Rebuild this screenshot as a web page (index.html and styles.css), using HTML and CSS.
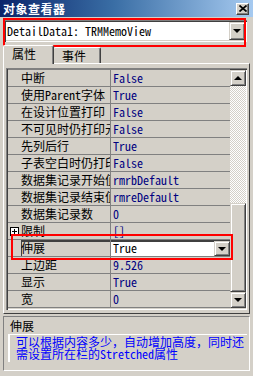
FILE: index.html
```html
<!DOCTYPE html>
<html lang="zh">
  <head>
    <meta charset="UTF-8" />
    <title>对象查看器</title>
    <link rel="stylesheet" href="styles.css">
  </head>
  <body>
    <div class="window">
      <div class="titlebar">
        <span class="title">对象查看器</span>
        <span class="close">
          <svg width="8" height="7" viewBox="0 0 8 7"><path d="M0.5 0.5L7.5 6.5M7.5 0.5L0.5 6.5" stroke="#000" stroke-width="1.7"/></svg>
        </span>
      </div>

      <!-- object selector -->
      <div class="selector">
        <div class="combo">
          <span class="combo-text">DetailData1: TRMMemoView</span>
          <span class="dropbtn"><i class="arrow-down"></i></span>
        </div>
      </div>

      <div class="tabs">
        <span class="tab active">属性</span>
        <span class="tab">事件</span>
      </div>

      <div class="page">
        <div class="grid">
          <div class="rows">
            <div class="row"><span class="gut"></span><span class="name">中断</span><span class="val">False</span></div>
            <div class="row"><span class="gut"></span><span class="name">使用Parent字体</span><span class="val">True</span></div>
            <div class="row"><span class="gut"></span><span class="name">在设计位置打印</span><span class="val">False</span></div>
            <div class="row"><span class="gut"></span><span class="name">不可见时仍打印元素</span><span class="val">False</span></div>
            <div class="row"><span class="gut"></span><span class="name">先列后行</span><span class="val">True</span></div>
            <div class="row"><span class="gut"></span><span class="name">子表空白时仍打印</span><span class="val">False</span></div>
            <div class="row"><span class="gut"></span><span class="name">数据集记录开始值</span><span class="val">rmrbDefault</span></div>
            <div class="row"><span class="gut"></span><span class="name">数据集记录结束值</span><span class="val">rmreDefault</span></div>
            <div class="row"><span class="gut"></span><span class="name">数据集记录数</span><span class="val">0</span></div>
            <div class="row"><span class="gut"><i class="plus"></i></span><span class="name">限制</span><span class="val">[]</span></div>
            <div class="row selected"><span class="gut"></span><span class="name">伸展</span><span class="val edit">True<span class="cellbtn"><i class="arrow-down"></i></span></span></div>
            <div class="row"><span class="gut"></span><span class="name">上边距</span><span class="val">9.526</span></div>
            <div class="row"><span class="gut"></span><span class="name">显示</span><span class="val">True</span></div>
            <div class="row"><span class="gut"></span><span class="name">宽</span><span class="val">0</span></div>
          </div>
          <div class="vscroll">
            <span class="sbtn"><i class="arrow-up"></i></span>
            <span class="track"></span>
            <span class="thumb"></span>
            <span class="sbtn"><i class="arrow-down"></i></span>
          </div>
        </div>
      </div>

      <!-- description -->
      <div class="desc">
        <div class="desc-title">伸展</div>
        <div class="desc-text">可以根据内容多少，自动增加高度，同时还<br>需设置所在栏的Stretched属性</div>
      </div>

      <div class="mark mark-combo"></div>
      <div class="mark mark-row"></div>
    </div>
  </body>
</html>
```

FILE: styles.css
```css
body {
  margin: 0;
  background: #d4d0c8;
  font-family: "Noto Sans Mono CJK SC", "Noto Sans CJK SC", monospace;
  font-size: 12px;
  color: #000;
}

.window {
  position: relative;
  width: 253px;
  height: 376px;
  background: #d4d0c8;
  overflow: hidden;
}

.titlebar {
  height: 17px;
  display: flex;
  align-items: center;
  justify-content: space-between;
  padding: 0 4px 0 3px;
  background: linear-gradient(to right, #0a246a, #3a6ea5 45%, #a6caf0);
}

.title {
  color: #fff;
  font-family: "Noto Sans CJK SC", sans-serif;
  font-weight: bold;
  font-size: 12px;
  letter-spacing: 0.5px;
  line-height: 17px;
}

.close {
  width: 13px;
  height: 12px;
  box-sizing: border-box;
  display: flex;
  align-items: center;
  justify-content: center;
  background: #d4d0c8;
  border: 1px solid;
  border-color: #fff #404040 #404040 #fff;
  box-shadow: inset -1px -1px #808080;
}

.selector {
  padding: 3px 6px 4px 4px;
}

.combo {
  height: 22px;
  box-sizing: border-box;
  display: flex;
  align-items: center;
  justify-content: space-between;
  padding: 2px;
  background: #fff;
  box-shadow: inset 1px 1px #808080, inset 2px 2px #404040, inset -1px -1px #fff, inset -2px -2px #d4d0c8;
}

.combo-text {
  padding-left: 1px;
  line-height: 16px;
}

.dropbtn,
.cellbtn,
.sbtn {
  display: flex;
  align-items: center;
  justify-content: center;
  box-sizing: border-box;
  background: #d4d0c8;
  border: 1px solid;
  border-color: #d4d0c8 #404040 #404040 #d4d0c8;
  box-shadow: inset 1px 1px #fff, inset -1px -1px #808080;
}

.dropbtn {
  width: 16px;
  height: 18px;
}

.arrow-down {
  width: 0;
  height: 0;
  border-left: 4px solid transparent;
  border-right: 4px solid transparent;
  border-top: 4px solid #000;
}

.arrow-up {
  width: 0;
  height: 0;
  border-left: 4px solid transparent;
  border-right: 4px solid transparent;
  border-bottom: 4px solid #000;
}

.tabs {
  display: flex;
  align-items: flex-end;
  height: 17px;
  padding-left: 3px;
}

.tab {
  height: 16px;
  box-sizing: border-box;
  padding: 0 7px 0 8px;
  line-height: 15px;
  font-family: "Noto Sans CJK SC", sans-serif;
  border: 1px solid;
  border-color: #fff #404040 transparent #fff;
  border-bottom: none;
  box-shadow: inset -1px 0 #808080;
  border-radius: 2px 2px 0 0;
}

.tab.active {
  height: 19px;
  width: 51px;
  margin-bottom: -1px;
  position: relative;
  z-index: 1;
  background: #d4d0c8;
}

.tab:not(.active) {
  width: 47px;
  border-left: none;
}

.page {
  margin: 0 3px;
  padding: 4px 2px 3px 2px;
  border: 1px solid;
  border-color: #fff #404040 #404040 #fff;
}

.grid {
  display: flex;
  padding: 2px 1px 2px 2px;
  box-shadow: inset 1px 1px #808080, inset 2px 2px #404040, inset -1px -1px #fff, inset -2px -2px #d4d0c8;
}

.rows {
  flex: 1;
  min-width: 0;
  border-top: 1px solid #808080;
  margin-top: -1px;
}

.row {
  display: flex;
  height: 17px;
  box-sizing: border-box;
  border-bottom: 1px solid #808080;
  line-height: 16px;
}

.gut {
  width: 13px;
  flex: none;
  display: flex;
  align-items: center;
  justify-content: center;
}

.plus {
  position: relative;
  width: 9px;
  height: 9px;
  box-sizing: border-box;
  border: 1px solid #000;
  background: #fff;
}

.plus::before,
.plus::after {
  content: "";
  position: absolute;
  background: #000;
}

.plus::before {
  left: 1px;
  top: 3px;
  width: 5px;
  height: 1px;
}

.plus::after {
  left: 3px;
  top: 1px;
  width: 1px;
  height: 5px;
}

.name {
  width: 89px;
  flex: none;
  overflow: hidden;
  white-space: nowrap;
  border-right: 1px solid #808080;
}

.val {
  flex: 1;
  min-width: 0;
  padding-left: 2px;
  color: #000080;
  white-space: nowrap;
}

.row.selected .name {
  box-shadow: inset 1px 2px #404040;
}

.val.edit {
  display: flex;
  justify-content: space-between;
  align-items: center;
  background: #fff;
  color: #000;
  box-shadow: inset 0 2px #404040;
}

.cellbtn {
  width: 16px;
  height: 15px;
  margin-top: 1px;
}

.vscroll {
  width: 16px;
  display: flex;
  flex-direction: column;
}

.sbtn {
  height: 16px;
  flex: none;
}

.track {
  height: 117px;
  background: repeating-conic-gradient(#fff 0 25%, #d4d0c8 0 50%) 0 0 / 2px 2px;
}

.thumb {
  flex: 1;
  box-sizing: border-box;
  background: #d4d0c8;
  border: 1px solid;
  border-color: #d4d0c8 #404040 #404040 #d4d0c8;
  box-shadow: inset 1px 1px #fff, inset -1px -1px #808080;
}

.desc {
  margin: 2px 3px 0 3px;
  height: 52px;
  padding: 1px 2px 0 4px;
  border: 1px solid;
  border-color: #808080 #fff #fff #808080;
}

.desc-title {
  line-height: 15px;
  padding-left: 2px;
}

.desc-text {
  margin-top: 1px;
  padding: 1px 0 2px 6px;
  border-top: 1px solid #fff;
  border-left: 2px solid #fff;
  color: #0000ff;
  line-height: 12px;
  white-space: nowrap;
}

.mark {
  position: absolute;
  border: 2px solid #f00;
  box-sizing: border-box;
}

.mark-combo {
  left: 3px;
  top: 18px;
  width: 243px;
  height: 29px;
}

.mark-row {
  left: 11px;
  top: 234px;
  width: 222px;
  height: 26px;
}
```
